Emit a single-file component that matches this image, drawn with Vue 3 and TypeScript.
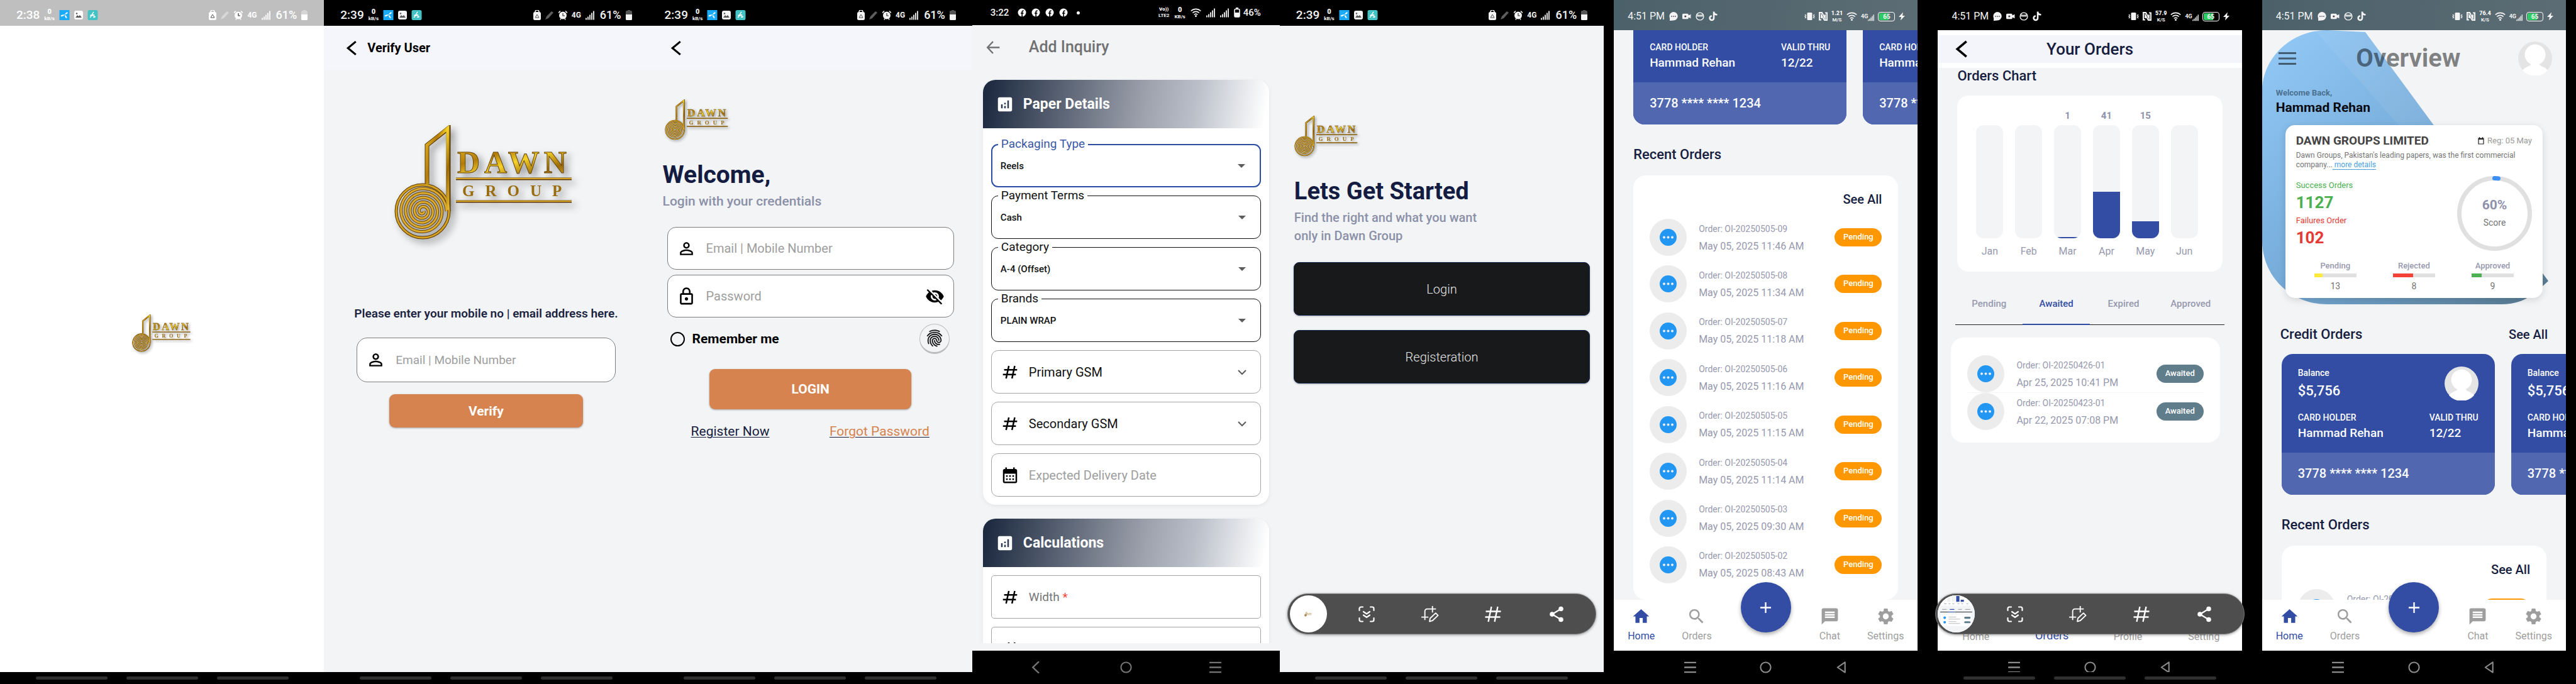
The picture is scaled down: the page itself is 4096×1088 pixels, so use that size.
<script setup lang="ts">
type Bar = 'samsung' | 'infinix' | 'oppo'
interface Screen { id: string; bar: Bar; time: string; rate: string; unit: string }
interface Order { no: string; date: string }

const screens: Screen[] = [
  { id: 'splash', bar: 'samsung', time: '2:38', rate: '0', unit: 'kB/s' },
  { id: 'verify', bar: 'samsung', time: '2:39', rate: '0', unit: 'kB/s' },
  { id: 'login', bar: 'samsung', time: '2:39', rate: '0', unit: 'kB/s' },
  { id: 'inquiry', bar: 'infinix', time: '3:22', rate: '0', unit: 'KB/s' },
  { id: 'start', bar: 'samsung', time: '2:39', rate: '0', unit: 'kB/s' },
  { id: 'home', bar: 'oppo', time: '4:51 PM', rate: '1.21', unit: 'M/S' },
  { id: 'orders', bar: 'oppo', time: '4:51 PM', rate: '57.9', unit: 'K/S' },
  { id: 'overview', bar: 'oppo', time: '4:51 PM', rate: '76.4', unit: 'K/S' },
]

const recent: Order[] = [
  { no: 'OI-20250505-09', date: 'May 05, 2025 11:46 AM' },
  { no: 'OI-20250505-08', date: 'May 05, 2025 11:34 AM' },
  { no: 'OI-20250505-07', date: 'May 05, 2025 11:18 AM' },
  { no: 'OI-20250505-06', date: 'May 05, 2025 11:16 AM' },
  { no: 'OI-20250505-05', date: 'May 05, 2025 11:15 AM' },
  { no: 'OI-20250505-04', date: 'May 05, 2025 11:14 AM' },
  { no: 'OI-20250505-03', date: 'May 05, 2025 09:30 AM' },
  { no: 'OI-20250505-02', date: 'May 05, 2025 08:43 AM' },
]
const awaited: Order[] = [
  { no: 'OI-20250426-01', date: 'Apr 25, 2025 10:41 PM' },
  { no: 'OI-20250423-01', date: 'Apr 22, 2025 07:08 PM' },
]
const months = [
  { name: 'Jan', count: 0 }, { name: 'Feb', count: 0 }, { name: 'Mar', count: 1 },
  { name: 'Apr', count: 41 }, { name: 'May', count: 15 }, { name: 'Jun', count: 0 },
]
const picks = [
  { id: 'packaging', label: 'Packaging Type', value: 'Reels' },
  { id: 'terms', label: 'Payment Terms', value: 'Cash' },
  { id: 'category', label: 'Category', value: 'A-4 (Offset)' },
  { id: 'brands', label: 'Brands', value: 'PLAIN WRAP' },
]
const stats = [
  { name: 'Pending', value: 13, fill: 20, color: '#ffe93b' },
  { name: 'Rejected', value: 8, fill: 48, color: '#f44336' },
  { name: 'Approved', value: 9, fill: 24, color: '#4caf50' },
]
const tabs = ['Pending', 'Awaited', 'Expired', 'Approved']

// Coil of the paper reel in the logo, wound out from its centre.
const coil = (() => {
  const pts: string[] = []
  const turns = 5
  for (let i = 0; i <= turns * 36; i++) {
    const a = (i / 36) * Math.PI * 2
    const r = 2 + (i / (turns * 36)) * 36
    pts.push(`${(45 + r * Math.cos(a)).toFixed(1)} ${(137 + r * Math.sin(a)).toFixed(1)}`)
  }
  return 'M' + pts.join('L')
})()
</script>

<template>
  <svg class="sprite" aria-hidden="true">
    <defs>
      <linearGradient id="gold" x1="0" y1="0" x2="1" y2="1">
        <stop offset="0" stop-color="#e6b622" /><stop offset=".3" stop-color="#b27c0a" />
        <stop offset=".5" stop-color="#f5d32a" /><stop offset=".75" stop-color="#9c6a08" />
        <stop offset="1" stop-color="#e2b52e" />
      </linearGradient>
      <linearGradient id="sky" x1="0" y1="0" x2="1" y2="1">
        <stop offset="0" stop-color="#94caf7" /><stop offset=".5" stop-color="#76abd8" />
        <stop offset="1" stop-color="#56788f" />
      </linearGradient>
    </defs>
    <symbol id="logo" viewBox="0 0 292 192">
      <g fill="none" stroke="#5a3705" stroke-width="7">
        <path d="M52 93V32L86 5v132" />
        <circle cx="45" cy="137" r="42" stroke-width="5" />
      </g>
      <path :d="coil" fill="none" stroke="#6b4508" stroke-width="5" />
      <path :d="coil" fill="none" stroke="#dcab2c" stroke-width="3" />
      <circle cx="45" cy="137" r="42" fill="none" stroke="#d3a020" stroke-width="3" />
      <path d="M52 94V32L85 5v130" fill="none" stroke="url(#gold)" stroke-width="5" />
      <path d="M98 85.500H282M98 121.500H282" stroke="#5a3705" stroke-width="4" />
      <path d="M98 85H282M98 121H282" stroke="#d6a422" stroke-width="2" />
      <text x="100" y="76" font-family="Liberation Serif, serif" font-weight="700" font-size="50"
        letter-spacing="7" fill="url(#gold)" stroke="#6b4508" stroke-width="1">DAWN</text>
      <text x="108" y="113" font-family="Liberation Serif, serif" font-weight="700" font-size="25"
        letter-spacing="17" fill="#9a6c10">GROUP</text>
    </symbol>
    <symbol id="i-back" viewBox="0 0 24 24"><path d="M18 2 6 12l12 10" fill="none" stroke="currentColor" stroke-width="3" /></symbol>
    <symbol id="i-arrow" viewBox="0 0 24 24"><path d="M21.500 12H3M11.500 3 3 12l8.500 9" fill="none" stroke="currentColor" stroke-width="2.200" /></symbol>
    <symbol id="i-person" viewBox="0 0 24 24"><path fill="currentColor" d="M12 5.900c1.160 0 2.100.94 2.100 2.100s-.94 2.100-2.100 2.100S9.900 9.160 9.900 8s.94-2.100 2.100-2.100m0 9c2.970 0 6.100 1.460 6.100 2.100v1.100H5.900V17c0-.64 3.130-2.100 6.100-2.100M12 4C9.790 4 8 5.790 8 8s1.790 4 4 4 4-1.790 4-4-1.790-4-4-4zm0 9c-2.670 0-8 1.340-8 4v3h16v-3c0-2.660-5.330-4-8-4z" /></symbol>
    <symbol id="i-lock" viewBox="0 0 24 24"><path fill="currentColor" d="M12 17c1.100 0 2-.9 2-2s-.9-2-2-2-2 .9-2 2 .9 2 2 2zm6-9h-1V6c0-2.760-2.240-5-5-5S7 3.240 7 6v2H6c-1.100 0-2 .9-2 2v10c0 1.100.9 2 2 2h12c1.100 0 2-.9 2-2V10c0-1.100-.9-2-2-2zM8.900 6c0-1.710 1.390-3.100 3.100-3.100s3.100 1.390 3.100 3.100v2H8.900V6zM18 20H6V10h12v10z" /></symbol>
    <symbol id="i-eyeoff" viewBox="0 0 24 24"><path fill="currentColor" d="M12 7c2.760 0 5 2.240 5 5 0 .65-.13 1.260-.36 1.830l2.920 2.920c1.510-1.260 2.700-2.890 3.430-4.750-1.730-4.390-6-7.500-11-7.500-1.400 0-2.740.25-3.980.7l2.160 2.160C10.740 7.130 11.350 7 12 7zM2 4.270l2.280 2.280.46.46C3.080 8.300 1.780 10.020 1 12c1.730 4.390 6 7.500 11 7.500 1.550 0 3.030-.3 4.380-.84l.42.42L19.730 22 21 20.730 3.270 3 2 4.270zM7.530 9.800l1.550 1.550c-.05.21-.08.43-.08.65 0 1.660 1.340 3 3 3 .22 0 .44-.03.65-.08l1.550 1.550c-.67.33-1.410.53-2.200.53-2.760 0-5-2.240-5-5 0-.79.2-1.530.53-2.200zm4.310-.78l3.150 3.150.02-.16c0-1.660-1.340-3-3-3l-.17.01z" /></symbol>
    <symbol id="i-finger" viewBox="0 0 24 24"><path fill="currentColor" stroke="currentColor" stroke-width=".3" d="M17.810 4.470c-.08 0-.16-.02-.23-.06C15.660 3.420 14 3 12.010 3c-1.980 0-3.860.47-5.570 1.410-.24.13-.54.04-.68-.2-.13-.24-.04-.55.2-.68C7.820 2.520 9.860 2 12.010 2c2.130 0 3.990.47 6.030 1.520.25.13.34.43.21.67-.09.18-.26.28-.44.28zM3.500 9.720c-.1 0-.2-.03-.29-.09-.23-.16-.28-.47-.12-.7.99-1.400 2.250-2.500 3.750-3.270C9.980 4.040 14 4.030 17.150 5.650c1.500.77 2.760 1.860 3.750 3.250.16.22.11.54-.12.7-.23.16-.54.11-.7-.12-.9-1.260-2.040-2.250-3.390-2.940-2.870-1.470-6.540-1.470-9.400.01-1.360.7-2.500 1.700-3.400 2.960-.08.14-.23.21-.39.21zm6.250 12.070c-.13 0-.26-.05-.35-.15-.87-.87-1.340-1.430-2.010-2.640-.69-1.230-1.050-2.730-1.050-4.340 0-2.970 2.540-5.390 5.660-5.390s5.660 2.420 5.660 5.390c0 .28-.22.5-.5.5s-.5-.22-.5-.5c0-2.420-2.090-4.390-4.660-4.390-2.570 0-4.660 1.970-4.660 4.390 0 1.440.32 2.770.93 3.850.64 1.150 1.080 1.640 1.850 2.420.19.2.19.51 0 .71-.11.1-.24.15-.37.15zm7.170-1.850c-1.190 0-2.240-.3-3.100-.89-1.490-1.010-2.380-2.650-2.380-4.390 0-.28.22-.5.5-.5s.5.22.5.5c0 1.410.72 2.740 1.940 3.560.71.48 1.540.71 2.540.71.24 0 .64-.03 1.040-.1.27-.05.53.13.58.41.05.27-.13.53-.41.58-.57.11-1.070.12-1.210.12zM14.910 22c-.04 0-.09-.01-.13-.02-1.590-.44-2.630-1.030-3.720-2.100-1.400-1.390-2.170-3.240-2.170-5.220 0-1.620 1.380-2.940 3.080-2.940 1.700 0 3.080 1.320 3.080 2.940 0 1.070.93 1.940 2.080 1.940s2.080-.87 2.080-1.940c0-3.770-3.250-6.830-7.250-6.830-2.840 0-5.440 1.580-6.610 4.030-.39.81-.59 1.760-.59 2.800 0 .78.07 2.010.67 3.610.1.26-.03.55-.29.64-.26.1-.55-.04-.64-.29-.49-1.310-.73-2.610-.73-3.960 0-1.200.23-2.290.68-3.240 1.330-2.790 4.280-4.600 7.510-4.600 4.550 0 8.250 3.510 8.250 7.830 0 1.620-1.380 2.940-3.080 2.940s-3.080-1.320-3.080-2.940c0-1.070-.93-1.940-2.080-1.940s-2.080.87-2.080 1.940c0 1.710.66 3.310 1.870 4.510.95.94 1.860 1.460 3.270 1.850.27.07.42.35.35.61-.05.23-.26.38-.47.38z" /></symbol>
    <symbol id="i-chart" viewBox="0 0 24 24"><path fill="currentColor" d="M19 3H5c-1.100 0-2 .9-2 2v14c0 1.100.9 2 2 2h14c1.100 0 2-.9 2-2V5c0-1.100-.9-2-2-2zM9 17H7v-5h2v5zm4 0h-2v-3h2v3zm0-5h-2v-2h2v2zm4 5h-2V7h2v10z" /></symbol>
    <symbol id="i-hash" viewBox="0 0 24 24"><path d="M10.500 4 7 20M18 4l-3.500 16M4.500 9H21M3 15h16.500" fill="none" stroke="currentColor" stroke-width="2" /></symbol>
    <symbol id="i-calendar" viewBox="0 0 24 24"><path fill="currentColor" d="M19 4h-1V2h-2v2H8V2H6v2H5c-1.110 0-1.990.9-1.990 2L3 20c0 1.100.89 2 2 2h14c1.100 0 2-.9 2-2V6c0-1.100-.9-2-2-2zm0 16H5V10h14v10zM9 14H7v-2h2v2zm4 0h-2v-2h2v2zm4 0h-2v-2h2v2zm-8 4H7v-2h2v2zm4 0h-2v-2h2v2zm4 0h-2v-2h2v2z" /></symbol>
    <symbol id="i-down" viewBox="0 0 14 14"><path d="m1 4 6 6 6-6" fill="none" stroke="currentColor" stroke-width="2" /></symbol>
    <symbol id="i-caret" viewBox="0 0 14 14"><path d="M1 4h12L7 10z" fill="currentColor" /></symbol>
    <symbol id="i-home" viewBox="0 0 24 24"><path fill="currentColor" d="M10 20v-6h4v6h5v-8h3L12 3 2 12h3v8z" /></symbol>
    <symbol id="i-search" viewBox="0 0 24 24"><path fill="currentColor" d="M15.500 14h-.79l-.28-.27A6.471 6.471 0 0 0 16 9.500 6.500 6.500 0 1 0 9.500 16c1.610 0 3.090-.59 4.230-1.570l.27.28v.79l5 4.990L20.490 19l-4.990-5zm-6 0C7.010 14 5 11.990 5 9.500S7.010 5 9.500 5 14 7.010 14 9.500 11.990 14 9.500 14z" /></symbol>
    <symbol id="i-chat" viewBox="0 0 24 24"><path fill="currentColor" d="M20 2H4c-1.100 0-1.990.9-1.990 2L2 22l4-4h14c1.100 0 2-.9 2-2V4c0-1.100-.9-2-2-2zm-2 12H6v-2h12v2zm0-3H6V9h12v2zm0-3H6V6h12v2z" /></symbol>
    <symbol id="i-gear" viewBox="0 0 24 24"><path fill="currentColor" d="M19.140 12.940c.04-.3.06-.61.06-.94 0-.32-.02-.64-.07-.94l2.030-1.580c.18-.14.23-.41.12-.61l-1.920-3.320c-.12-.22-.37-.29-.59-.22l-2.390.96c-.5-.38-1.030-.7-1.620-.94l-.36-2.540c-.04-.24-.24-.41-.48-.41h-3.840c-.24 0-.43.17-.47.41l-.36 2.540c-.59.24-1.130.57-1.620.94l-2.390-.96c-.22-.08-.47 0-.59.22L2.740 8.870c-.12.21-.08.47.12.61l2.030 1.580c-.05.3-.09.63-.09.94s.02.64.07.94l-2.030 1.580c-.18.14-.23.41-.12.61l1.920 3.320c.12.22.37.29.59.22l2.390-.96c.5.38 1.030.7 1.620.94l.36 2.540c.05.24.24.41.48.41h3.840c.24 0 .44-.17.47-.41l.36-2.540c.59-.24 1.130-.56 1.620-.94l2.390.96c.22.08.47 0 .59-.22l1.920-3.320c.12-.22.07-.47-.12-.61l-2.010-1.580zM12 15.600c-1.980 0-3.600-1.620-3.600-3.600s1.620-3.600 3.600-3.600 3.600 1.620 3.600 3.600-1.620 3.600-3.600 3.600z" /></symbol>
    <symbol id="i-plus" viewBox="0 0 20 20"><path d="M10 1v18M1 10h18" stroke="currentColor" stroke-width="2.500" /></symbol>
    <symbol id="i-menu" viewBox="0 0 28 20"><path d="M0 1.500h28M0 10h28M0 18.500h28" stroke="currentColor" stroke-width="3" /></symbol>
    <symbol id="i-date" viewBox="0 0 10 12"><path d="M1 2h8v9H1zM2.500 0v2M7.500 0v2" fill="none" stroke="currentColor" stroke-width="1.200" /><path d="M1 2h8v2H1z" fill="currentColor" /></symbol>
    <symbol id="i-avatar" viewBox="0 0 54 54"><circle cx="27" cy="27" r="27" fill="#e4e4e4" /><path d="M7 46C13 38 20 40 20 36a16.500 16.500 0 1 1 14 0c0 4 8 3 13 10a27 27 0 0 1-40 0z" fill="#fff" /></symbol>
    <symbol id="i-dots" viewBox="0 0 27 27"><circle cx="13.500" cy="13.500" r="13.500" fill="#2196f3" /><g fill="#eee"><circle cx="7" cy="13.500" r="2" /><circle cx="13.500" cy="13.500" r="2" /><circle cx="20" cy="13.500" r="2" /></g></symbol>
    <!-- capture toolbar -->
    <symbol id="i-scroll" viewBox="0 0 26 26"><g fill="none" stroke="currentColor" stroke-width="2.200" stroke-linecap="round"><path d="M1.500 7V4a2.500 2.500 0 0 1 2.500-2.500h3M19 1.500h3A2.500 2.500 0 0 1 24.500 4v3M24.500 19v3a2.500 2.500 0 0 1-2.500 2.500h-3M7 24.500H4A2.500 2.500 0 0 1 1.500 22v-3M8 9l5 3.500L18 9M8 14.500 13 18l5-3.500" /></g></symbol>
    <symbol id="i-crop" viewBox="0 0 30 28"><g fill="none" stroke="currentColor" stroke-width="2"><path d="M6 24V9a4 4 0 0 1 4-4h15M0 19h12M19 0v11" /><path d="m15 21 9.500-9 4 4-9.500 9-5 1.500z" stroke-linejoin="round" /></g></symbol>
    <symbol id="i-tag" viewBox="0 0 26 26"><path d="M10.500 1 5.500 25M20.500 1l-5 24M1.500 8.500h24M.5 17.500h24" fill="none" stroke="currentColor" stroke-width="2.400" /></symbol>
    <symbol id="i-share" viewBox="0 0 24 26"><path d="M19 4.500 5 13l14 8.500" fill="none" stroke="currentColor" stroke-width="2.200" /><g fill="currentColor"><circle cx="19" cy="4.500" r="3.800" /><circle cx="5" cy="13" r="3.800" /><circle cx="19" cy="21.500" r="3.800" /></g></symbol>
    <!-- android keys -->
    <symbol id="k-back" viewBox="0 0 20 20"><path d="M13 1 3.500 10l9.500 9" fill="none" stroke="currentColor" stroke-width="2.500" stroke-linecap="round" /></symbol>
    <symbol id="k-home" viewBox="0 0 20 20"><circle cx="10" cy="10" r="8.500" fill="none" stroke="currentColor" stroke-width="2.200" /></symbol>
    <symbol id="k-menu" viewBox="0 0 20 20"><path d="M1 2h18M1 10h18M1 18h18" stroke="currentColor" stroke-width="2.500" stroke-linecap="round" /></symbol>
    <symbol id="k-tri" viewBox="0 0 20 20"><path d="M15.500 1.500v17L3 10z" fill="none" stroke="currentColor" stroke-width="2.200" stroke-linejoin="round" /></symbol>
    <!-- status icons -->
    <symbol id="s-telenor" viewBox="0 0 17 17"><path d="M0 0h17v17H0z" fill="#19aaf8" /><path d="M9 8c1-3 3-5 5-4 1 1-2 3-5 4zm0 0c-2-1-6 0-7 2 2 2 5 0 7-2zm0 0c0 3 1 5 3 6 2-1 0-4-3-6z" fill="#fff" /></symbol>
    <symbol id="s-image" viewBox="0 0 14 14"><rect width="14" height="14" rx="3" fill="currentColor" /><path d="m2 11 3-4 2 2 2-2 3 4z" fill="#555" /><circle cx="4" cy="4.500" r="1.200" fill="#555" /></symbol>
    <symbol id="s-h" viewBox="0 0 17 17"><rect width="17" height="17" rx="3" fill="#43c3c6" /><path d="M4 13 10 3M7 10c3-3 5-1 3 2 1 1 2 0 3-1M4 9l7-1" fill="none" stroke="#fff" stroke-width="1.500" /></symbol>
    <symbol id="s-bag" viewBox="0 0 12 16"><rect y="3" width="12" height="13" rx="2.500" fill="currentColor" /><path d="M3 3a3 3 0 0 1 6 0" fill="none" stroke="currentColor" stroke-width="1.500" /><path d="m3 12 3-5 3 5z" fill="none" stroke="#555" /></symbol>
    <symbol id="s-pen" viewBox="0 0 14 14"><path d="m0 14 2-5 8-8 3 2-8 9z" fill="currentColor" opacity=".38" /></symbol>
    <symbol id="s-alarm" viewBox="0 0 14 15"><circle cx="7" cy="8" r="6" fill="currentColor" /><path d="m0 4 3-3M14 4l-3-3M3 15l1-2M11 15l-1-2" stroke="currentColor" stroke-width="1.600" /><path d="M7 4.500V8.500h3" fill="none" stroke="#333" stroke-width="1.200" /></symbol>
    <symbol id="s-signal" viewBox="0 0 14 15"><path d="M1 15v-3M4 15v-5M7 15V7M10 15V4M13 15V1" stroke="currentColor" stroke-width="1.800" /></symbol>
    <symbol id="s-batt" viewBox="0 0 10 16"><path d="M3 0h4v1h1.500A1.500 1.500 0 0 1 10 2.500V8H0V2.500A1.500 1.500 0 0 1 1.500 1H3z" fill="currentColor" opacity=".35" /><path d="M0 7h10v7.500a1.500 1.500 0 0 1-1.500 1.500h-7A1.500 1.500 0 0 1 0 14.500z" fill="currentColor" /></symbol>
    <symbol id="s-f" viewBox="0 0 14 14"><circle cx="7" cy="7" r="6.500" fill="#fff" /><path d="M7.200 14V6q0-2 2.500-2M5 8h4.500" fill="none" stroke="#000" stroke-width="1.700" /></symbol>
    <symbol id="s-wifi" viewBox="0 0 17 14"><g fill="none" stroke="currentColor" stroke-width="1.700"><path d="M.8 4.500a11 11 0 0 1 15.400 0M3.300 7.500a7.500 7.500 0 0 1 10.400 0M5.800 10.300a4 4 0 0 1 5.400 0" /></g><circle cx="8.500" cy="12.500" r="1.500" fill="currentColor" /></symbol>
    <symbol id="s-cell" viewBox="0 0 10 16"><rect x="1" y="2.500" width="8" height="12.500" rx="1.500" fill="none" stroke="currentColor" stroke-width="1.600" /><path d="M3 0h4v2H3zM1 8h8v7H1z" fill="currentColor" /></symbol>
    <symbol id="s-chat" viewBox="0 0 13 13"><path d="M6.500 0a6.300 6.300 0 0 1 0 12.600L1 13V9A6.300 6.300 0 0 1 6.500 0z" fill="currentColor" /><path d="M3 6.500h1.500M5.800 6.500h1.500M8.500 6.500H10" stroke="#445" stroke-width="1.500" /></symbol>
    <symbol id="s-cam" viewBox="0 0 13 13"><path d="M1.500 2.500h6A1.500 1.500 0 0 1 9 4v1l3.500-1.500v6L9 8v1a1.500 1.500 0 0 1-1.500 1.500h-6A1.500 1.500 0 0 1 0 9V4a1.500 1.500 0 0 1 1.500-1.500z" fill="currentColor" /><circle cx="4.500" cy="6.500" r="1.500" fill="#445" /></symbol>
    <symbol id="s-face" viewBox="0 0 13 13"><circle cx="6.500" cy="6.500" r="5.500" fill="none" stroke="currentColor" stroke-width="1.300" /><path d="M2 3q4.500 2.500 9 0v4H2z" fill="currentColor" opacity=".8" /></symbol>
    <symbol id="s-tok" viewBox="0 0 13 14"><path d="M7.500 0v9.500a3 3 0 1 1-3-3M7.500 1q1 3.500 5 3.500" fill="none" stroke="currentColor" stroke-width="2.400" /></symbol>
    <symbol id="s-vib" viewBox="0 0 17 14"><rect x="4.500" y="1" width="8" height="12" rx="1.500" fill="currentColor" /><path d="m1 4 1.500 1.500L1 7l1.500 1.500L1 10M16 4l-1.500 1.500L16 7l-1.500 1.500L16 10" fill="none" stroke="currentColor" stroke-width="1.200" /></symbol>
    <symbol id="s-nfc" viewBox="0 0 14 14"><g fill="none" stroke="currentColor" stroke-width="2"><path d="M4 12.500H1V1h4l5 9V4M10 1.500h3V13H9L4 5v5" /></g></symbol>
    <symbol id="s-bolt" viewBox="0 0 10 13"><path d="M7 0 0 7.500h4L3 13l7-7.500H6z" fill="currentColor" /></symbol>
    <!-- thumbnail of the orders page held by the capture toolbar -->
    <symbol id="thumb" viewBox="0 0 58 58">
      <path d="M0 0h58v58H0z" fill="#f2f4f6" /><path d="M0 0h58v16H0z" fill="#fff" />
      <path d="M29 1h5v9h-5zM36 7h5v3h-5z" fill="#314da3" /><path d="M15 0h5v10h-5zM22 0h5v10h-5z" fill="#f0f1f3" />
      <path d="M4 26h50" stroke="#333" /><path d="M16 26h12M19 22h7" stroke="#314da3" /><path d="M7 22h7M32 22h6M43 22h8M10 13h4M17 13h3M23 13h3M31 13h3M37 13h3M45 13h3" stroke="#aaa" />
      <rect x="5" y="30" width="48" height="18" rx="2" fill="#fff" />
      <g fill="#2196f3"><circle cx="11" cy="35" r="2" /><circle cx="11" cy="42" r="2" /></g>
      <path d="M17 34h12M17 37h18M17 41h12M17 44h18" stroke="#bbb" /><path d="M43 35h7M43 42h7" stroke="#607d8b" stroke-width="3" stroke-linecap="round" />
    </symbol>
  </svg>

  <main class="wall">
    <section v-for="s in screens" :key="s.id" class="phone" :class="[s.bar, s.id]">
      <div class="inner">
        <!-- status bars -->
        <header v-if="s.bar === 'samsung'" class="status">
          <div class="group">
            <span class="clock">{{ s.time }}</span>
            <span class="rate"><b>{{ s.rate }}</b>{{ s.unit }}</span>
            <svg class="w17"><use href="#s-telenor" /></svg>
            <svg class="w14"><use href="#s-image" /></svg>
            <svg class="w17"><use href="#s-h" /></svg>
          </div>
          <div class="group">
            <svg class="w12"><use href="#s-bag" /></svg>
            <svg class="w14"><use href="#s-pen" /></svg>
            <svg class="w14"><use href="#s-alarm" /></svg>
            <span class="net">4G</span>
            <svg class="w14"><use href="#s-signal" /></svg>
            <span class="pct">61%</span>
            <svg class="w10"><use href="#s-batt" /></svg>
          </div>
        </header>
        <header v-else-if="s.bar === 'infinix'" class="status">
          <div class="group">
            <span class="clock">{{ s.time }}</span>
            <svg v-for="n in 4" :key="n" class="w14"><use href="#s-f" /></svg>
            <span class="dot"></span>
          </div>
          <div class="group">
            <span class="rate"><b class="volte">Vo))</b>LTE2</span>
            <span class="rate"><b>{{ s.rate }}</b>{{ s.unit }}</span>
            <svg class="w17"><use href="#s-wifi" /></svg>
            <svg class="w14"><use href="#s-signal" /></svg>
            <svg class="w14"><use href="#s-signal" /></svg>
            <span class="cell"><svg class="w10"><use href="#s-cell" /></svg>46%</span>
          </div>
        </header>
        <header v-else class="status">
          <div class="group">
            <span class="clock">{{ s.time }}</span>
            <svg class="w14"><use href="#s-chat" /></svg>
            <svg class="w14"><use href="#s-cam" /></svg>
            <svg class="w14"><use href="#s-face" /></svg>
            <svg class="w14"><use href="#s-tok" /></svg>
          </div>
          <div class="group tight">
            <svg class="w17"><use href="#s-vib" /></svg>
            <svg class="w14"><use href="#s-nfc" /></svg>
            <span class="rate"><b>{{ s.rate }}</b>{{ s.unit }}</span>
            <svg class="w17"><use href="#s-wifi" /></svg>
            <span class="net"><i>4G</i><svg class="w10"><use href="#s-signal" /></svg></span>
            <span class="charge"><span>65</span></span>
            <svg class="w10"><use href="#s-bolt" /></svg>
          </div>
        </header>

        <!-- splash -->
        <div v-if="s.id === 'splash'" class="body center">
          <svg class="logo" role="img" aria-label="Dawn Group"><use href="#logo" /></svg>
        </div>

        <!-- verify user -->
        <div v-else-if="s.id === 'verify'" class="body">
          <div class="appbar">
            <button class="bare" aria-label="Back"><svg><use href="#i-back" /></svg></button>
            <h1>Verify User</h1>
          </div>
          <form class="form" @submit.prevent>
            <svg class="logo big" role="img" aria-label="Dawn Group"><use href="#logo" /></svg>
            <label class="ask" for="verify-id">Please enter your mobile no | email address here.</label>
            <div class="entry">
              <svg><use href="#i-person" /></svg>
              <input id="verify-id" type="text" placeholder="Email | Mobile Number" />
            </div>
            <button class="cta">Verify</button>
          </form>
        </div>

        <!-- login -->
        <div v-else-if="s.id === 'login'" class="body">
          <div class="appbar">
            <button class="bare" aria-label="Back"><svg><use href="#i-back" /></svg></button>
          </div>
          <div class="intro">
            <svg class="logo" role="img" aria-label="Dawn Group"><use href="#logo" /></svg>
            <h1>Welcome,</h1>
            <p>Login with your credentials</p>
          </div>
          <form class="form" @submit.prevent>
            <div class="entry">
              <svg><use href="#i-person" /></svg>
              <input type="text" aria-label="Email or mobile number" placeholder="Email | Mobile Number" />
            </div>
            <div class="entry">
              <svg><use href="#i-lock" /></svg>
              <input type="password" aria-label="Password" placeholder="Password" />
              <button type="button" class="bare" aria-label="Show password"><svg><use href="#i-eyeoff" /></svg></button>
            </div>
            <div class="remember">
              <label><input type="checkbox" />Remember me</label>
              <button type="button" class="finger" aria-label="Use fingerprint"><svg><use href="#i-finger" /></svg></button>
            </div>
            <button class="cta">LOGIN</button>
            <div class="links"><a href="#">Register Now</a><a href="#" class="warm"><span>Forgot Password</span></a></div>
          </form>
        </div>

        <!-- add inquiry -->
        <div v-else-if="s.id === 'inquiry'" class="body">
          <div class="appbar">
            <button class="bare" aria-label="Back"><svg><use href="#i-arrow" /></svg></button>
            <h1>Add Inquiry</h1>
          </div>
          <form class="sheets" @submit.prevent>
            <section class="sheet">
              <h2><svg><use href="#i-chart" /></svg>Paper Details</h2>
              <div class="fields">
                <div v-for="(p, i) in picks" :key="p.id" class="box solid" :class="{ focus: i === 0 }">
                  <label :for="p.id">{{ p.label }}</label>
                  <select :id="p.id"><option>{{ p.value }}</option></select>
                  <svg class="mark"><use href="#i-caret" /></svg>
                </div>
                <div v-for="g in ['Primary GSM', 'Secondary GSM']" :key="g" class="box">
                  <svg class="lead"><use href="#i-hash" /></svg>
                  <select :aria-label="g"><option>{{ g }}</option></select>
                  <svg class="mark"><use href="#i-down" /></svg>
                </div>
                <div class="box">
                  <svg class="lead"><use href="#i-calendar" /></svg>
                  <input type="text" aria-label="Expected delivery date" placeholder="Expected Delivery Date" />
                </div>
              </div>
            </section>
            <section class="sheet">
              <h2><svg><use href="#i-chart" /></svg>Calculations</h2>
              <div class="fields short">
                <div class="box">
                  <svg class="lead"><use href="#i-hash" /></svg>
                  <label for="paper-width" class="hint">Width <em>*</em></label>
                  <input id="paper-width" type="text" />
                </div>
                <div class="box">
                  <svg class="lead"><use href="#i-hash" /></svg>
                  <input type="text" aria-label="Length" />
                </div>
              </div>
            </section>
          </form>
        </div>

        <!-- get started -->
        <div v-else-if="s.id === 'start'" class="body">
          <div class="intro">
            <svg class="logo" role="img" aria-label="Dawn Group"><use href="#logo" /></svg>
            <h1>Lets Get Started</h1>
            <p>Find the right and what you want<br />only in Dawn Group</p>
          </div>
          <div class="choices"><button>Login</button><button>Registeration</button></div>
        </div>

        <!-- home, scrolled to the recent orders -->
        <div v-else-if="s.id === 'home'" class="body">
          <div class="feed">
            <div class="cards">
              <article v-for="n in 2" :key="n" class="card">
                <div class="top">
                  <div class="pair end"><svg class="avatar"><use href="#i-avatar" /></svg></div>
                  <div class="pair low"><div><small>CARD HOLDER</small><strong>Hammad Rehan</strong></div><div><small>VALID THRU</small><strong>12/22</strong></div></div>
                </div>
                <div class="digits">3778 **** **** 1234</div>
              </article>
            </div>
            <h2>Recent Orders</h2>
            <section class="panel">
              <a href="#" class="all">See All</a>
              <ul>
                <li v-for="o in recent" :key="o.no" class="order">
                  <span class="disc"><svg><use href="#i-dots" /></svg></span>
                  <div><small>Order: {{ o.no }}</small><span>{{ o.date }}</span></div>
                  <span class="pill">Pending</span>
                </li>
              </ul>
            </section>
          </div>
        </div>

        <!-- your orders -->
        <div v-else-if="s.id === 'orders'" class="body">
          <div class="appbar">
            <button class="bare" aria-label="Back"><svg><use href="#i-back" /></svg></button>
            <h1>Your Orders</h1>
          </div>
          <h2>Orders Chart</h2>
          <div class="chart">
            <div v-for="m in months" :key="m.name" class="month">
              <b>{{ m.count || '' }}</b>
              <div class="track"><div :style="{ height: m.count + '%' }"></div></div>
              <span>{{ m.name }}</span>
            </div>
          </div>
          <nav class="tabs">
            <button v-for="t in tabs" :key="t" :class="{ on: t === 'Awaited' }">{{ t }}</button>
          </nav>
          <ul class="panel waiting">
            <li v-for="o in awaited" :key="o.no" class="order">
              <span class="disc"><svg><use href="#i-dots" /></svg></span>
              <div><small>Order: {{ o.no }}</small><span>{{ o.date }}</span></div>
              <span class="pill slate">Awaited</span>
            </li>
          </ul>
        </div>

        <!-- overview -->
        <div v-else class="body">
          <svg class="blob" viewBox="0 0 456 436"><path d="M164 3 103 0C46 0 0 44 0 98v236c0 58 46 102 103 102h278c40 0 56-22 74-37z" fill="url(#sky)" /><path d="M84 1l80 2 109 148h-56z" fill="#fff" opacity=".06" /></svg>
          <div class="hero">
            <button class="bare" aria-label="Menu"><svg class="burger"><use href="#i-menu" /></svg></button>
            <h1>Overview</h1>
            <svg class="avatar"><use href="#i-avatar" /></svg>
          </div>
          <p class="hello">Welcome Back,</p>
          <p class="who">Hammad Rehan</p>
          <section class="company">
            <div class="pair"><h2>DAWN GROUPS LIMITED</h2><span class="reg"><svg><use href="#i-date" /></svg>Reg: 05 May</span></div>
            <p>Dawn Groups, Pakistan's leading papers, was the first commercial company...<a href="#"> more details</a></p>
            <div class="pair score">
              <dl>
                <dt class="good">Success Orders</dt><dd class="good">1127</dd>
                <dt class="bad">Failures Order</dt><dd class="bad">102</dd>
              </dl>
              <div class="ring">
                <svg viewBox="0 0 119 119"><circle cx="59.500" cy="59.500" r="56" fill="none" stroke="#e0e0e0" stroke-width="7" /><path d="M59.500 3.500q3 0 6 .4" fill="none" stroke="#3d8ef5" stroke-width="7" stroke-linecap="round" /></svg>
                <strong>60%</strong><span>Score</span>
              </div>
            </div>
            <div class="stats">
              <div v-for="t in stats" :key="t.name">
                <b>{{ t.name }}</b>
                <div class="gauge"><div :style="{ width: t.fill + '%', background: t.color }"></div></div>
                <span>{{ t.value }}</span>
              </div>
            </div>
          </section>
          <div class="pair credit"><h2>Credit Orders</h2><a href="#" class="all">See All</a></div>
          <div class="cards">
            <article v-for="n in 2" :key="n" class="card">
              <div class="top">
                <div class="pair"><div><small>Balance</small><strong class="sum">$5,756</strong></div><svg class="avatar"><use href="#i-avatar" /></svg></div>
                <div class="pair low"><div><small>CARD HOLDER</small><strong>Hammad Rehan</strong></div><div><small>VALID THRU</small><strong>12/22</strong></div></div>
              </div>
              <div class="digits">3778 **** **** 1234</div>
            </article>
          </div>
          <h2 class="recent">Recent Orders</h2>
          <section class="panel">
            <a href="#" class="all">See All</a>
            <ul>
              <li class="order">
                <span class="disc"><svg><use href="#i-dots" /></svg></span>
                <div><small>Order: OI-20250505-09</small><span>&nbsp;</span></div>
                <span class="pill"></span>
              </li>
            </ul>
          </section>
        </div>

        <!-- app navigation -->
        <nav v-if="s.id === 'home' || s.id === 'overview'" class="dock">
          <div>
            <a href="#" class="on"><svg><use href="#i-home" /></svg>Home</a>
            <a href="#"><svg><use href="#i-search" /></svg>Orders</a>
          </div>
          <button class="fab" aria-label="Add inquiry"><svg><use href="#i-plus" /></svg></button>
          <div>
            <a href="#"><svg><use href="#i-chat" /></svg>Chat</a>
            <a href="#"><svg><use href="#i-gear" /></svg>Settings</a>
          </div>
        </nav>
        <nav v-if="s.id === 'orders'" class="dock quarters">
          <a href="#">Home</a><a href="#" class="on">Orders</a><a href="#">Profile</a><a href="#">Setting</a>
        </nav>

        <!-- system navigation -->
        <footer v-if="s.bar !== 'samsung'" class="keys">
          <template v-if="s.bar === 'infinix'">
            <svg><use href="#k-back" /></svg><svg><use href="#k-home" /></svg><svg><use href="#k-menu" /></svg>
          </template>
          <template v-else>
            <svg><use href="#k-menu" /></svg><svg><use href="#k-home" /></svg><svg><use href="#k-tri" /></svg>
          </template>
        </footer>
      </div>
      <footer v-if="s.bar === 'samsung' || s.id === 'orders'" class="pills"><i></i><i></i><i></i></footer>
      <div v-if="s.id === 'start' || s.id === 'orders'" class="capture">
        <span class="shot">
          <svg v-if="s.id === 'start'" class="mini"><use href="#logo" /></svg>
          <svg v-else><use href="#thumb" /></svg>
        </span>
        <button aria-label="Scroll capture"><svg><use href="#i-scroll" /></svg></button>
        <button aria-label="Crop and draw"><svg><use href="#i-crop" /></svg></button>
        <button aria-label="Add tags"><svg><use href="#i-tag" /></svg></button>
        <button aria-label="Share"><svg><use href="#i-share" /></svg></button>
      </div>
    </section>
  </main>
</template>

<style>
html, body { margin: 0; background: #000; }
</style>

<style scoped>
* { box-sizing: border-box; }
svg { display: block; flex: none; }
h1, h2, p, ul, dl, dd { margin: 0; padding: 0; }
ul { list-style: none; }
button, input, select { font: inherit; color: inherit; border: 0; background: none; padding: 0; outline: 0; }
a { color: inherit; text-decoration: none; }
.sprite { position: absolute; width: 0; height: 0; }
.bare { display: flex; }

.wall {
  display: grid;
  grid-template-columns: repeat(3, minmax(0, 1fr)) 489px repeat(4, minmax(0, 1fr));
  height: 100vh;
  font-family: Roboto, "Liberation Sans", sans-serif;
  color: #161d3f;
}
.phone { position: relative; display: flex; flex-direction: column; min-width: 0; height: 100vh; background: #000; }
.inner { position: relative; flex: 1; min-height: 0; display: flex; flex-direction: column; overflow: hidden; }
.oppo .inner { margin: 0 16px; }
.body { position: relative; flex: 1; min-height: 0; overflow: hidden; background: #f2f4f6; }

/* status bars */
.status { flex: none; display: flex; justify-content: space-between; align-items: center; height: 41px; padding: 6px 26px 0; color: #f4f4f4; }
.group { display: flex; align-items: center; gap: 7px; }
.clock, .pct { font-size: 19px; font-weight: 500; line-height: 24px; }
.pct { font-size: 18px; margin-left: 2px; }
.rate { display: flex; flex-direction: column; align-items: center; font-size: 8px; line-height: 10px; font-weight: 700; }
.rate b { font-size: 11px; line-height: 13px; }
.net { font-size: 12px; font-weight: 700; line-height: 16px; }
.w10, .w12, .w14, .w17 { height: 16px; }
.w10 { width: 10px; }
.w12 { width: 12px; }
.w14 { width: 14px; }
.w17 { width: 17px; }
.splash .status { background: #bfbfbf; color: #fff; }
.infinix .status { height: 40px; padding: 0 30px 0 29px; }
.infinix .group { gap: 8px; }
.infinix .clock { margin-right: 6px; font-size: 15px; }
.rate .volte { font-size: 8px; line-height: 10px; }
.dot { width: 5px; height: 5px; margin-left: 6px; border-radius: 50%; background: #fff; }
.cell { display: flex; align-items: center; gap: 5px; font-size: 15px; font-weight: 500; }
.oppo .status { height: 48px; padding: 4px 20px 0 22px; background: linear-gradient(100deg, #4b616a, #5c6c74); }
.orders .status { background: #000; }
.oppo .clock { font-size: 16px; font-weight: 400; }
.oppo .tight { gap: 6px; }
.oppo .rate b { font-size: 9px; line-height: 11px; }
.oppo .net { display: flex; align-items: flex-end; }
.oppo .net i { font-style: normal; font-size: 9px; line-height: 20px; }
.charge { display: flex; align-items: center; width: 27px; height: 15px; padding: 1px; border: 1px solid #fff; border-radius: 4px; }
.charge span { width: 100%; border-radius: 2px; background: linear-gradient(90deg, #2ecc63 65%, transparent 65%); font-size: 10px; line-height: 11px; font-weight: 700; text-align: center; }

/* system keys */
.pills { flex: none; display: flex; justify-content: center; align-items: center; gap: 30px; height: 19px; background: #000; }
.pills i { width: 114px; height: 5px; border-radius: 3px; background: #303030; }
.orders .pills { position: absolute; left: 0; right: 0; bottom: 0; }
.keys { flex: none; display: grid; grid-template-columns: repeat(3, 1fr); justify-items: center; align-items: center; height: 53px; padding: 0 61px; background: #000; color: #8c8c8c; }
.infinix .keys { padding: 0 32px; color: #757575; }
.keys svg { width: 19px; height: 19px; }

/* logo */
.logo { width: 104px; height: 68px; filter: drop-shadow(2px 2px 2px #0006); }
.logo.big { width: 292px; height: 192px; filter: drop-shadow(6px 6px 6px #0006); }
.center { display: flex; align-items: center; justify-content: center; padding-bottom: 48px; background: #fff; }
.center .logo { width: 96px; height: 63px; }

/* sign-in pages */
.appbar { display: flex; align-items: center; height: 70px; padding: 0 32px; gap: 12px; background: #f5f6fb; color: #000; }
.appbar svg { width: 25px; height: 25px; }
.appbar h1 { font-size: 20px; line-height: 28px; font-weight: 700; }
.form { display: flex; flex-direction: column; align-items: center; }
.verify .form { padding: 88px 52px 0; }
.ask { margin-top: 94px; font-size: 19px; line-height: 28px; font-weight: 600; white-space: nowrap; color: #1b2340; }
.entry { display: flex; align-items: center; width: 100%; height: 68px; padding: 0 14px; gap: 16px; border: 1px solid #7d7d7d; border-radius: 14px; background: #fff; color: #000; font-size: 20px; }
.verify .entry { height: 71px; margin-top: 24px; border-radius: 17px; font-size: 19px; }
.entry svg { width: 31px; height: 31px; }
.entry input { flex: 1; min-width: 0; height: 100%; }
.entry input::placeholder, .box input::placeholder { color: #9e9e9e; opacity: 1; }
.cta { height: 64px; border-radius: 9px; background: #d6834f; color: #fff; font-weight: 700; font-size: 21px; box-shadow: 0 1px 3px #0005; }
.verify .cta { width: 75%; height: 53px; margin-top: 19px; }
.intro { padding: 47px 23px 0; }
.login .logo { margin-left: 3px; }
.intro h1 { margin-top: 29px; font-size: 38px; line-height: 46px; font-weight: 700; color: #141c42; }
.intro p { margin-top: 5px; font-size: 20px; line-height: 29px; font-weight: 500; color: #8b90a7; }
.login .intro h1 { font-size: 39px; }
.login .intro p { font-size: 21px; }
.login .form { padding: 26px 29px 0 30px; }
.login .entry + .entry { margin-top: 8px; }
.remember { display: flex; justify-content: space-between; align-items: center; width: 100%; margin-top: 10px; padding: 0 7px 0 5px; color: #000; font-size: 21px; line-height: 28px; font-weight: 700; }
.remember label { display: flex; align-items: center; gap: 12px; }
.remember input { appearance: none; width: 23px; height: 23px; margin: 0; border: 2px solid #000; border-radius: 50%; }
.finger { display: flex; align-items: center; justify-content: center; width: 48px; height: 48px; border: 1px solid #bcbcbc; border-bottom-width: 3px; border-radius: 50%; }
.finger svg { width: 32px; height: 32px; }
.login .cta { width: 321px; margin-top: 24px; }
.links { display: flex; justify-content: space-between; width: 100%; margin-top: 21px; padding: 0 39px 0 38px; font-size: 21px; line-height: 28px; }
.links a { text-decoration: underline; text-decoration-color: #161d3f; text-decoration-thickness: 1px; text-underline-offset: 2px; }
.links .warm span { color: #d6834f; }

/* inquiry form */
.inquiry .body { padding: 0 17px; border-bottom: 12px solid #f2f4f6; }
.inquiry .appbar { padding: 0 4px; gap: 44px; background: none; color: #717173; }
.inquiry .appbar h1 { font-size: 25px; font-weight: 500; }
.sheets { display: flex; flex-direction: column; gap: 22px; padding-top: 17px; }
.sheet { border-radius: 20px; background: #fff; box-shadow: 0 2px 6px #0001; }
.sheet h2 { display: flex; align-items: center; gap: 14px; height: 77px; padding: 0 20px; border-radius: 20px 20px 0 0; background: linear-gradient(100deg, #1d2a40 2%, #5f6878 30%, #9fa3ae 57%, #b9bec8 73%, #fff 98%); color: #fff; font-size: 23px; line-height: 30px; }
.sheet h2 svg { width: 30px; height: 30px; }
.fields { display: flex; flex-direction: column; gap: 13px; padding: 25px 13px 13px; }
.fields.short { padding-top: 13px; }
.box { position: relative; display: flex; align-items: center; height: 69px; padding: 0 22px 0 14px; border: 1px solid #a5a5a5; border-radius: 11px; color: #111; font-size: 20px; }
.short .box { border-radius: 5px; }
.box.solid { border-color: #111; font-size: 15px; font-weight: 500; }
.box.focus { border: 2px solid #2c4da6; }
.box.solid label { position: absolute; top: -12px; left: 10px; padding: 0 5px; background: #fff; font-size: 19px; line-height: 22px; font-weight: 400; }
.box.focus label { top: -13px; left: 9px; color: #3a57a5; }
.box select, .box input { flex: 1; min-width: 0; height: 100%; appearance: none; }
.box.focus select { margin-left: -1px; }
.box .mark { width: 14px; height: 14px; color: #5c5c5c; }
.box .lead { width: 30px; height: 30px; margin-right: 15px; color: #000; }
.hint { color: #757575; font-size: 19px; }
.hint em { color: #f44336; font-style: normal; }

/* get started */
.start .intro { padding-top: 143px; }
.choices { display: flex; flex-direction: column; gap: 23px; padding: 27px 22px; }
.choices button { height: 85px; border: 1px solid #10224a; border-radius: 9px; background: #18191b; color: #e6e6e6; font-size: 20px; font-weight: 300; box-shadow: 0 1px 3px #0004; }

/* capture toolbar */
.capture { position: absolute; z-index: 2; left: 12px; right: 12px; bottom: 79px; height: 65px; display: flex; align-items: center; padding: 0 12px 0 3px; border: 1px solid #777; border-radius: 33px; background: #4e4e4e; color: #fff; box-shadow: 0 1px 4px #0006; }
.capture button { flex: 1; display: flex; justify-content: center; }
.capture button svg { width: 28px; height: 26px; }
.shot { display: flex; align-items: center; justify-content: center; width: 59px; height: 59px; margin-right: 13px; overflow: hidden; border-radius: 50%; background: #fff; }
.shot svg { width: 59px; height: 59px; }
.shot .mini { width: 12px; height: 8px; }

/* shared blocks of the order pages */
.home .body { display: flex; flex-direction: column; }
.feed { flex: 1; min-height: 0; display: flex; flex-direction: column; margin-top: -74px; }
.pair { display: flex; justify-content: space-between; }
.end { justify-content: flex-end; }
.cards { flex: none; display: flex; gap: 26px; padding-left: 31px; overflow: hidden; }
.card { flex: none; width: 339px; overflow: hidden; border-radius: 18px; background: #324da3; color: #fff; }
.top { height: 157px; padding: 20px 26px 0; }
.card small { display: block; font-size: 14px; line-height: 20px; font-weight: 500; }
.card strong { display: block; font-size: 19px; line-height: 30px; font-weight: 500; }
.card .sum { margin-top: 4px; font-size: 22px; }
.avatar { width: 54px; height: 54px; }
.low { margin-top: 17px; }
.digits { height: 67px; padding-left: 26px; background: #5168b1; font-size: 20px; line-height: 66px; font-weight: 500; }
.oppo h2 { font-size: 22px; line-height: 30px; font-weight: 500; }
.feed h2, .recent { margin: 33px 31px 18px; }
.all { font-size: 20px; line-height: 25px; font-weight: 500; }
.panel { display: flex; flex-direction: column; margin: 0 31px; padding: 26px; border-radius: 20px; background: #fff; }
.panel .all { align-self: flex-end; }
.panel ul { flex: 1; display: flex; flex-direction: column; justify-content: space-between; padding-top: 18px; }
.feed .panel { flex: 1; }
.order { display: flex; align-items: center; color: #9799ae; font-size: 16px; line-height: 27px; }
.order small { display: block; font-size: 14px; }
.order div { flex: 1; margin-left: 19px; white-space: nowrap; }
.disc { display: flex; align-items: center; justify-content: center; width: 59px; height: 59px; border-radius: 50%; background: #ececec; }
.disc svg { width: 27px; height: 27px; }
.pill { width: 75px; height: 29px; border-radius: 15px; background: #ff9800; color: #fff; font-size: 13px; line-height: 28px; font-weight: 500; text-align: center; }
.slate { background: #607d8b; }

.dock { position: relative; z-index: 1; flex: none; display: flex; justify-content: space-between; height: 81px; padding: 0 22px; background: #fff; color: #9e9e9e; font-size: 16px; line-height: 24px; }
.dock div { display: flex; gap: 43px; }
.dock a { display: flex; flex-direction: column; align-items: center; padding-top: 11px; }
.dock svg { width: 31px; height: 31px; margin-bottom: 4px; }
.dock .on { color: #324da3; }
.dock .fab { position: absolute; top: -28px; left: 50%; display: flex; align-items: center; justify-content: center; width: 80px; height: 80px; margin-left: -40px; border-radius: 50%; background: #324da3; color: #fff; box-shadow: 0 3px 6px #0005; }
.dock .fab svg { width: 19px; height: 19px; margin: 0; }
.dock.quarters { padding: 0; }
.quarters a { flex: 1; padding-top: 47px; }
.quarters .on { padding-top: 45px; font-size: 18px; }

/* your orders */
.orders .appbar { display: grid; grid-template-columns: 30px 1fr 30px; gap: 0; height: 60px; padding: 0 24px; border: solid #fff; border-width: 8px 0; background: #f4f5fa; }
.orders .appbar svg { width: 29px; height: 38px; }
.orders .appbar h1 { font-size: 26px; line-height: 30px; font-weight: 500; text-align: center; color: #161d3f; }
.orders h2 { margin: -2px 31px 0; }
.chart { display: flex; justify-content: space-between; margin: 16px 31px 0; height: 280px; padding: 20px 39px 0 30px; border-radius: 18px; background: #fff; color: #9799ae; font-size: 16px; line-height: 24px; }
.month { display: flex; flex-direction: column; align-items: center; width: 43px; }
.month b { height: 24px; font-size: 15px; font-weight: 700; color: #8f93aa; }
.track { display: flex; flex-direction: column; justify-content: flex-end; width: 100%; height: 180px; margin: 3px 0 9px; overflow: hidden; border-radius: 12px; background: #f2f4f6; }
.track div { background: #324da3; }
.tabs { display: flex; margin: 32px 28px 0; height: 53px; border-bottom: 1px solid #222; }
.tabs button { flex: 1; height: 53px; border-bottom: 2px solid transparent; padding-bottom: 14px; font-size: 15px; font-weight: 500; color: #9799ae; }
.tabs .on { color: #324da3; border-color: #324da3; }
.waiting { margin: 20px 35px 0 21px; padding: 28px 26px 20px; }
.waiting .order + .order { border-top: 1px solid #f4f4f4; }

/* overview */
.blob { position: absolute; top: 0; left: 0; width: 456px; height: 436px; }
.overview .body > :not(.blob) { position: relative; }
.hero { display: flex; justify-content: space-between; align-items: center; padding: 18px 22px 0 26px; }
.hero h1 { margin-right: -4px; font-size: 40px; line-height: 54px; font-weight: 700; color: #0007; }
.burger { width: 28px; height: 20px; color: #0008; }
.hello { margin: 18px 22px 0; font-size: 13px; line-height: 20px; font-weight: 700; color: #4b7090; }
.who { margin: 0 22px; font-size: 21px; line-height: 27px; font-weight: 700; color: #080a10; }
.company { margin: 14px 37px 0; padding: 12px 17px 9px; border-radius: 15px; background: #fff; color: #757575; font-size: 12px; line-height: 15px; box-shadow: 0 3px 12px #0002; }
.company h2 { font-size: 19px; line-height: 25px; font-weight: 700; color: #444; }
.company p { margin-top: 4px; }
.company p a { color: #4a9fe0; text-decoration: underline; text-underline-offset: 3px; }
.reg { display: flex; align-items: center; gap: 5px; font-size: 13px; color: #9a9a9a; }
.reg svg { width: 10px; height: 12px; color: #222; }
.score { align-items: center; margin-top: 10px; }
.score dt { font-size: 13px; line-height: 20px; }
.score dd { font-size: 26px; line-height: 34px; font-weight: 700; }
.score dd + dt { margin-top: 2px; }
.good { color: #4caf50; }
.bad { color: #e53935; }
.ring { position: relative; display: flex; flex-direction: column; align-items: center; justify-content: center; width: 119px; height: 119px; font-size: 14px; line-height: 28px; }
.ring svg { position: absolute; inset: 0; }
.ring strong { font-size: 21px; color: #8f91ab; }
.stats { display: grid; grid-template-columns: repeat(3, 1fr); justify-items: center; margin-top: 13px; font-size: 14px; line-height: 20px; text-align: center; }
.stats b { font-size: 13px; font-weight: 500; color: #9799ae; }
.gauge { width: 67px; height: 6px; margin: 2px 0 4px; background: #e0e0e0; }
.gauge div { height: 100%; }
.credit { margin: 43px 29px 16px; align-items: center; }
</style>
